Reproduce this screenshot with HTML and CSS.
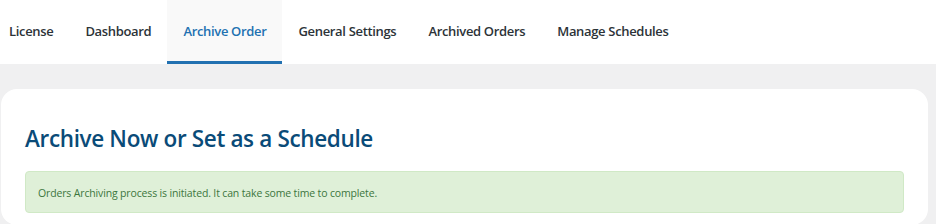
FILE: index.html
```html
<!DOCTYPE html>
<html lang="en">
<head>
    <meta charset="UTF-8">
    <title>Archive Order</title>
    <link rel="stylesheet" href="styles.css">
</head>
<body>

    <!-- Tabs -->
    <nav class="tabs">
        <a href="#" class="tab first">License</a>
        <a href="#" class="tab">Dashboard</a>
        <a href="#" class="tab active">Archive Order</a>
        <a href="#" class="tab">General Settings</a>
        <a href="#" class="tab">Archived Orders</a>
        <a href="#" class="tab">Manage Schedules</a>
    </nav>

    <!-- Content -->
    <main class="wrap">
        <section class="card">
            <h1>Archive Now or Set as a Schedule</h1>
            <div class="notice">Orders Archiving process is initiated. It can take some time to complete.</div>
        </section>
    </main>

</body>
</html>
```

FILE: styles.css
```css
* {
    margin: 0;
    padding: 0;
    box-sizing: border-box;
}

body {
    background: #f0f0f1;
    font-family: "Open Sans", "Noto Sans", sans-serif;
    color: #1d2327;
    overflow: hidden;
}

/* Tabs */
.tabs {
    display: flex;
    height: 64px;
    background: #fff;
    padding-left: 9px;
}

.tab {
    display: flex;
    align-items: center;
    padding: 1px 16px 0;
    font-size: 13px;
    font-weight: 600;
    letter-spacing: -0.33px;
    color: #2c3338;
    text-decoration: none;
    border-bottom: 3px solid transparent;
}

.tab.first {
    padding-left: 0;
}

.tab.active {
    background: #f9f9f9;
    color: #2271b1;
    border-bottom-color: #2271b1;
}

/* Content */
.wrap {
    padding: 25px 8px 0 1px;
}

.card {
    background: #fff;
    border-radius: 16px;
    padding: 34px 24px 12px 24px;
}

.card h1 {
    font-size: 22.5px;
    font-weight: 600;
    letter-spacing: -0.35px;
    color: #0a4b78;
    line-height: 32px;
    margin-bottom: 16px;
}

.notice {
    background: #dff0d8;
    border: 1px solid #d0e9c6;
    border-radius: 4px;
    color: #3c763d;
    font-size: 10.5px;
    letter-spacing: -0.15px;
    padding: 13px 12px 11px;
    line-height: 16px;
}
```
